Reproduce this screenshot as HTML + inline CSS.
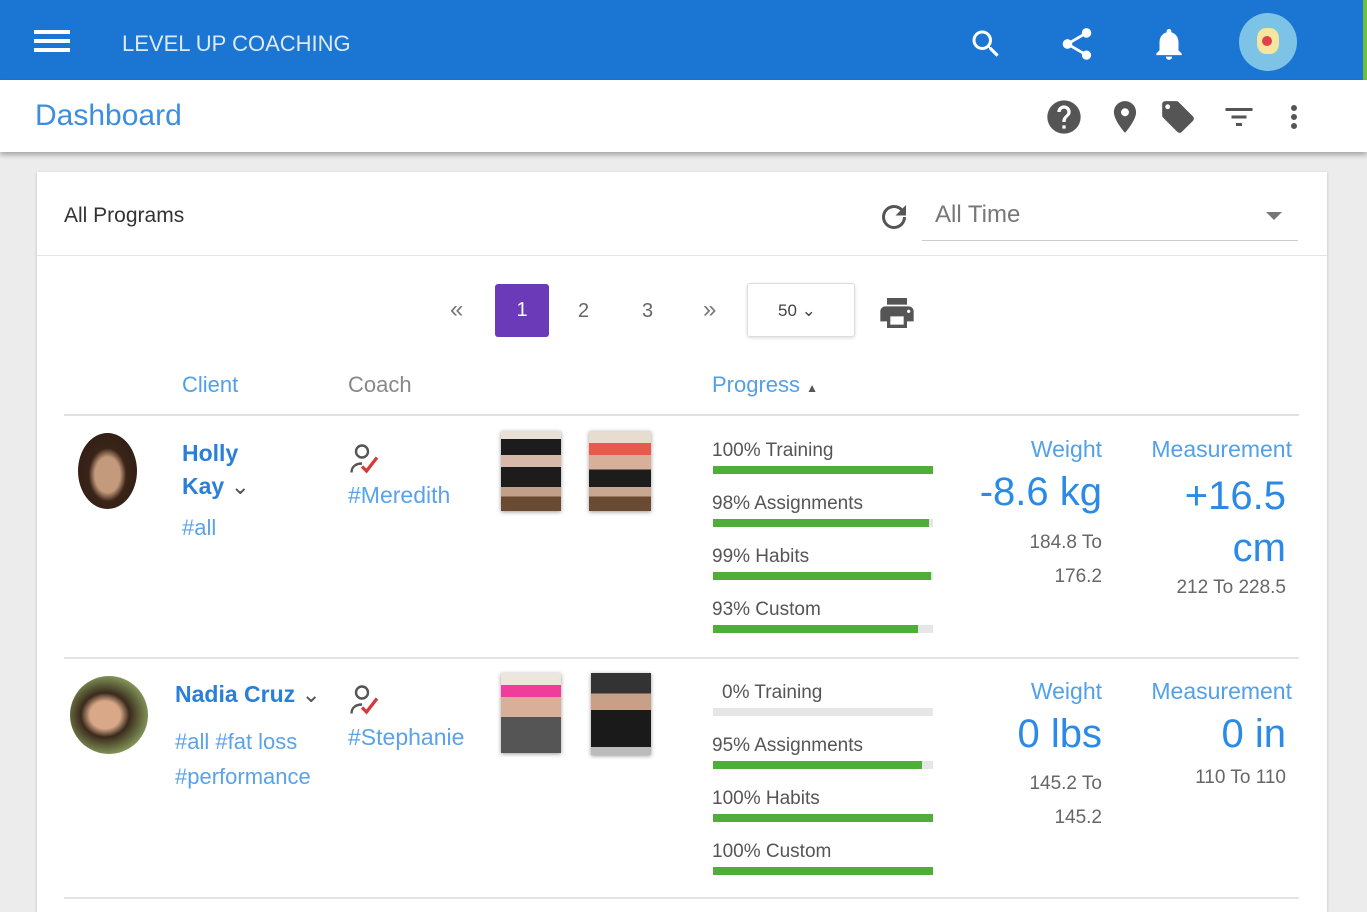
<!DOCTYPE html>
<html><head><meta charset="utf-8"><style>
*{margin:0;padding:0;box-sizing:border-box}
body{width:1367px;height:900px;overflow:hidden;background:#ececec;font-family:"Liberation Sans",sans-serif;position:relative}
.a{position:absolute}
.top{left:0;top:0;width:1367px;height:80px;background:#1a76d2}
.sub{left:0;top:80px;width:1367px;height:72px;background:#fff;box-shadow:0 3px 5px rgba(0,0,0,.3)}
.card{left:37px;top:172px;width:1290px;height:740px;background:#fff;box-shadow:0 1px 3px rgba(0,0,0,.2)}
.blue{color:#2a8ae6}
.g{color:#666}
.bar{height:8px;background:#e6e6e6;width:220px}
.bar i{display:block;height:8px;background:#4fae3a}
.lbl{font-size:19px;color:#555}
.ph{box-shadow:0 1px 4px rgba(0,0,0,.4)}
.wl{font-size:23px;color:#52a0ea;text-align:right}
.wv{font-size:40px;color:#2a8ae6;text-align:right}
</style></head><body>
<div class="a top"></div>
<div class="a" style="left:1363px;top:0;width:4px;height:80px;background:#6fbf3a"></div>
<div class="a" style="left:34px;top:30px;width:36px;height:4px;background:#fff;box-shadow:0 9px 0 #fff,0 18px 0 #fff"></div>
<div class="a" style="left:122px;top:31px;color:#dfe8f5;font-size:22px;letter-spacing:0">LEVEL UP COACHING</div>
<svg class="a" style="left:968px;top:26px" width="36" height="36" viewBox="0 0 24 24"><path fill="#fff" d="M15.5 14h-.79l-.28-.27A6.47 6.47 0 0016 9.5 6.5 6.5 0 109.5 16c1.61 0 3.090-.59 4.23-1.57l.27.28v.79l5 4.99L20.49 19l-4.99-5zm-6 0C7.01 14 5 11.99 5 9.5S7.01 5 9.5 5 14 7.01 14 9.5 11.99 14 9.5 14z"/></svg>
<svg class="a" style="left:1058px;top:25px" width="38" height="38" viewBox="0 0 24 24"><path fill="#fff" d="M18 16.08c-.76 0-1.44.3-1.960.77L8.91 12.7c.05-.23.09-.46.09-.7s-.04-.47-.09-.7l7.050-4.11A2.99 2.99 0 0021 5a3 3 0 10-6 0c0 .24.04.47.09.7L8.04 9.81A2.99 2.99 0 003 12a3 3 0 005.04 2.19l7.12 4.16c-.05.21-.08.43-.08.65A2.92 2.92 0 1018 16.08z"/></svg>
<svg class="a" style="left:1150px;top:25px" width="38" height="38" viewBox="0 0 24 24"><path fill="#fff" d="M12 22c1.1 0 2-.9 2-2h-4a2 2 0 002 2zm6-6v-5c0-3.07-1.64-5.64-4.5-6.32V4c0-.83-.67-1.5-1.5-1.5s-1.5.67-1.5 1.5v.68C7.63 5.36 6 7.92 6 11v5l-2 2v1h16v-1l-2-2z"/></svg>
<div class="a" style="left:1239px;top:13px;width:58px;height:58px;border-radius:50%;background:#7cc3e6"></div>
<div class="a" style="left:1257px;top:28px;width:22px;height:26px;border-radius:40%;background:#f4e6a0"></div>
<div class="a" style="left:1262px;top:36px;width:10px;height:10px;border-radius:50%;background:#e0404a"></div>

<div class="a sub"></div>
<div class="a" style="left:35px;top:99px;font-size:30px;color:#3b8ee0">Dashboard</div>
<svg class="a" style="left:1044px;top:97px" width="40" height="40" viewBox="0 0 24 24"><path fill="#555" d="M12 2a10 10 0 100 20 10 10 0 000-20zm1 17h-2v-2h2v2zm2.07-7.75l-.9.92C13.45 12.9 13 13.5 13 15h-2v-.5c0-1.1.45-2.1 1.17-2.83l1.24-1.26A2 2 0 0012 7a2 2 0 00-2 2H8a4 4 0 018 0c0 .88-.36 1.68-.93 2.25z"/></svg>
<svg class="a" style="left:1106px;top:98px" width="38" height="38" viewBox="0 0 24 24"><path fill="#555" d="M12 2C8.13 2 5 5.13 5 9c0 5.25 7 13 7 13s7-7.75 7-13c0-3.87-3.13-7-7-7zm0 9.5a2.5 2.5 0 110-5 2.5 2.5 0 010 5z"/></svg>
<svg class="a" style="left:1159px;top:98px" width="38" height="38" viewBox="0 0 24 24"><path fill="#555" d="M21.41 11.58l-9-9C12.05 2.22 11.55 2 11 2H4c-1.1 0-2 .9-2 2v7c0 .55.22 1.05.59 1.42l9 9c.36.36.86.58 1.41.58.55 0 1.05-.22 1.41-.59l7-7c.37-.36.59-.86.59-1.41 0-.55-.23-1.06-.59-1.42zM5.5 7C4.67 7 4 6.33 4 5.5S4.67 4 5.5 4 7 4.670 7 5.5 6.33 7 5.5 7z"/></svg>
<svg class="a" style="left:1221px;top:99px" width="36" height="36" viewBox="0 0 24 24"><path fill="#555" d="M3 6h18v2H3zm4 5h10v2H7zm3 5h4v2h-4z"/></svg>
<svg class="a" style="left:1276px;top:99px" width="36" height="36" viewBox="0 0 24 24"><path fill="#555" d="M12 8a2 2 0 100-4 2 2 0 000 4zm0 2a2 2 0 100 4 2 2 0 000-4zm0 6a2 2 0 100 4 2 2 0 000-4z"/></svg>

<div class="a card"></div>
<div class="a" style="left:64px;top:204px;font-size:21px;color:#333">All Programs</div>
<svg class="a" style="left:876px;top:199px" width="36" height="36" viewBox="0 0 24 24"><path fill="#555" d="M17.65 6.35A7.958 7.958 0 0012 4a8 8 0 108 8h-2a6 6 0 11-1.76-4.24L13 11h7V4l-2.35 2.35z"/></svg>
<div class="a" style="left:935px;top:201px;font-size:24px;color:#777">All Time</div>
<div class="a" style="left:1266px;top:212px;border-left:8px solid transparent;border-right:8px solid transparent;border-top:8px solid #777"></div>
<div class="a" style="left:922px;top:240px;width:376px;height:1px;background:#ccc"></div>
<div class="a" style="left:37px;top:255px;width:1290px;height:1px;background:#e4e4e4"></div>

<div class="a" style="left:450px;top:296px;font-size:24px;color:#777">«</div>
<div class="a" style="left:495px;top:284px;width:54px;height:53px;background:#6a3ab8;border-radius:3px;color:#fff;font-size:20px;text-align:center;line-height:53px">1</div>
<div class="a" style="left:578px;top:300px;font-size:20px;color:#666">2</div>
<div class="a" style="left:642px;top:300px;font-size:20px;color:#666">3</div>
<div class="a" style="left:703px;top:296px;font-size:24px;color:#777">»</div>
<div class="a" style="left:747px;top:283px;width:108px;height:54px;border:1px solid #ddd;border-radius:3px;box-shadow:0 1px 3px rgba(0,0,0,.15);font-size:17px;color:#444;padding:17px 0 0 30px">50 ⌄</div>
<svg class="a" style="left:877px;top:293px" width="40" height="40" viewBox="0 0 24 24"><path fill="#555" d="M19 8H5c-1.66 0-3 1.34-3 3v6h4v4h12v-4h4v-6c0-1.66-1.34-3-3-3zm-3 11H8v-5h8v5zm3-7c-.55 0-1-.45-1-1s.45-1 1-1 1 .45 1 1-.45 1-1 1zm-1-9H6v4h12V3z"/></svg>

<div class="a" style="left:182px;top:372px;font-size:22px;color:#52a0ea">Client</div>
<div class="a" style="left:348px;top:372px;font-size:22px;color:#888">Coach</div>
<div class="a" style="left:712px;top:372px;font-size:22px;color:#52a0ea">Progress <span style="font-size:12px;color:#555">▲</span></div>
<div class="a" style="left:64px;top:414px;width:1235px;height:2px;background:#e0e0e0"></div>

<!-- row 1 -->
<div class="a" style="left:78px;top:433px;width:59px;height:76px;border-radius:50%;background:radial-gradient(ellipse at 50% 55%,#c49a7c 0 30%,#3a2418 45%,#2b1a12)"></div>
<div class="a" style="left:182px;top:437px;font-size:23px;font-weight:bold;color:#2a7fd8;line-height:33px">Holly<br>Kay <span style="color:#555;font-weight:normal">⌄</span></div>
<div class="a" style="left:182px;top:515px;font-size:22px;color:#5aa2ea">#all</div>
<svg class="a" style="left:347px;top:441px" width="36" height="36" viewBox="0 0 24 24"><circle cx="10" cy="7" r="4" fill="none" stroke="#555" stroke-width="1.6"/><path d="M3 21c0-4 3-6 7-6" fill="none" stroke="#555" stroke-width="1.6"/><path d="M10 17l3 3 7-9" fill="none" stroke="#d43a3a" stroke-width="2.2"/></svg>
<div class="a" style="left:348px;top:482px;font-size:23px;color:#5aa2ea">#Meredith</div>
<div class="a ph" style="left:501px;top:431px;width:60px;height:80px;background:linear-gradient(#e8e0d4 0 10%,#1c1c1c 10% 30%,#d8b8a8 30% 45%,#1c1c1c 45% 70%,#c0a088 70% 82%,#6a4a30 82%)"></div>
<div class="a ph" style="left:589px;top:431px;width:62px;height:80px;background:linear-gradient(#e6ddd0 0 15%,#e85a4a 15% 30%,#d8b09a 30% 48%,#1c1c1c 48% 70%,#c8a890 70% 82%,#6a4a30 82%)"></div>

<div class="a lbl" style="left:712px;top:440px">100% Training</div>
<div class="a bar" style="left:713px;top:466px"><i style="width:100%"></i></div>
<div class="a lbl" style="left:712px;top:493px">98% Assignments</div>
<div class="a bar" style="left:713px;top:519px"><i style="width:98%"></i></div>
<div class="a lbl" style="left:712px;top:546px">99% Habits</div>
<div class="a bar" style="left:713px;top:572px"><i style="width:99%"></i></div>
<div class="a lbl" style="left:712px;top:599px">93% Custom</div>
<div class="a bar" style="left:713px;top:625px"><i style="width:93%"></i></div>

<div class="a wl" style="left:900px;top:436px;width:202px">Weight</div>
<div class="a wv" style="left:900px;top:470px;width:202px">-8.6 kg</div>
<div class="a g" style="left:940px;top:526px;width:162px;text-align:right;font-size:19px;line-height:34px">184.8 To<br>176.2</div>
<div class="a wl" style="left:1100px;top:436px;width:192px">Measurement</div>
<div class="a wv" style="left:1100px;top:470px;width:186px;line-height:52px">+16.5<br>cm</div>
<div class="a g" style="left:1100px;top:577px;width:186px;text-align:right;font-size:19px">212 To 228.5</div>

<div class="a" style="left:64px;top:657px;width:1235px;height:2px;background:#e4e4e4"></div>

<!-- row 2 -->
<div class="a" style="left:70px;top:676px;width:78px;height:78px;border-radius:50%;background:radial-gradient(ellipse at 45% 50%,#d8a888 0 25%,#3a2a1c 40%,#8aa060 75%,#c8d0b0)"></div>
<div class="a" style="left:175px;top:681px;font-size:23px;font-weight:bold;color:#2a7fd8">Nadia Cruz <span style="color:#555;font-weight:normal">⌄</span></div>
<div class="a" style="left:175px;top:724px;font-size:22px;color:#5aa2ea;line-height:35px">#all #fat loss<br>#performance</div>
<svg class="a" style="left:347px;top:682px" width="36" height="36" viewBox="0 0 24 24"><circle cx="10" cy="7" r="4" fill="none" stroke="#555" stroke-width="1.6"/><path d="M3 21c0-4 3-6 7-6" fill="none" stroke="#555" stroke-width="1.6"/><path d="M10 17l3 3 7-9" fill="none" stroke="#d43a3a" stroke-width="2.2"/></svg>
<div class="a" style="left:348px;top:724px;font-size:23px;color:#5aa2ea">#Stephanie</div>
<div class="a ph" style="left:501px;top:673px;width:60px;height:80px;background:linear-gradient(#ece6dc 0 15%,#f03c9a 15% 30%,#d8b09a 30% 55%,#555 55% 100%)"></div>
<div class="a ph" style="left:591px;top:673px;width:60px;height:82px;background:linear-gradient(#333 0 25%,#c8a088 25% 45%,#1a1a1a 45% 90%,#bbb 90%)"></div>

<div class="a lbl" style="left:722px;top:682px">0% Training</div>
<div class="a bar" style="left:713px;top:708px"></div>
<div class="a lbl" style="left:712px;top:735px">95% Assignments</div>
<div class="a bar" style="left:713px;top:761px"><i style="width:95%"></i></div>
<div class="a lbl" style="left:712px;top:788px">100% Habits</div>
<div class="a bar" style="left:713px;top:814px"><i style="width:100%"></i></div>
<div class="a lbl" style="left:712px;top:841px">100% Custom</div>
<div class="a bar" style="left:713px;top:867px"><i style="width:100%"></i></div>

<div class="a wl" style="left:900px;top:678px;width:202px">Weight</div>
<div class="a wv" style="left:900px;top:712px;width:202px">0 lbs</div>
<div class="a g" style="left:940px;top:767px;width:162px;text-align:right;font-size:19px;line-height:34px">145.2 To<br>145.2</div>
<div class="a wl" style="left:1100px;top:678px;width:192px">Measurement</div>
<div class="a wv" style="left:1100px;top:712px;width:186px">0 in</div>
<div class="a g" style="left:1100px;top:767px;width:186px;text-align:right;font-size:19px">110 To 110</div>
<div class="a" style="left:64px;top:897px;width:1235px;height:2px;background:#e4e4e4"></div>
</body></html>
